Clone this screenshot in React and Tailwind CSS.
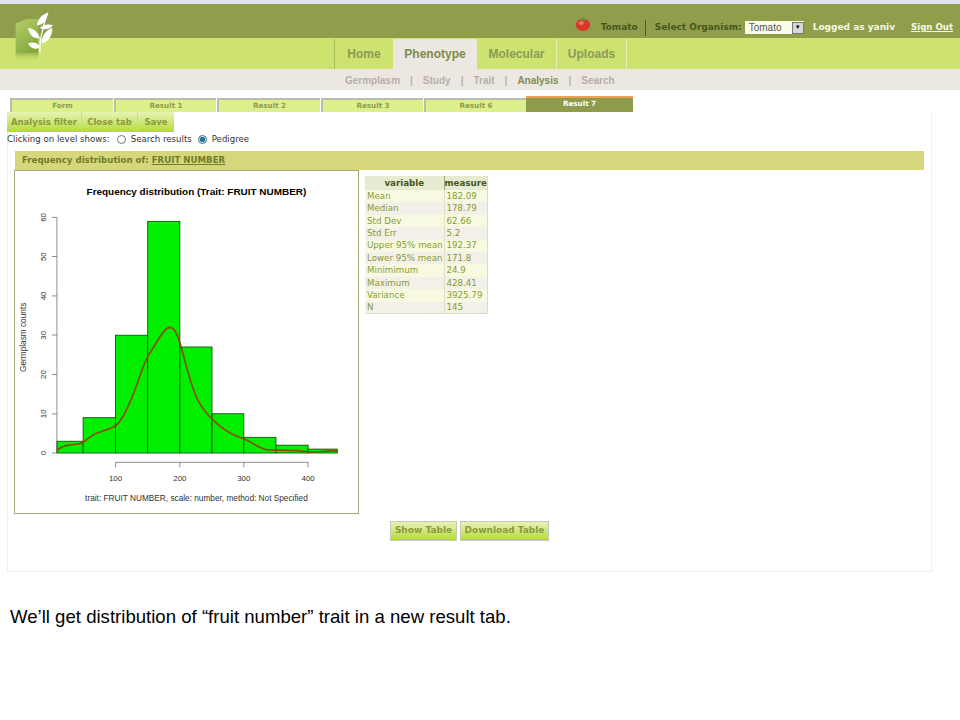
const tabs = [
  { label: "Form", width: "w-[103px]" },
  { label: "Result 1", width: "w-[102px]" },
  { label: "Result 2", width: "w-[103px]" },
  { label: "Result 3", width: "w-[102px]" },
  { label: "Result 6", width: "w-[102px]" },
];

const stats = [
  ["Mean", "182.09"],
  ["Median", "178.79"],
  ["Std Dev", "62.66"],
  ["Std Err", "5.2"],
  ["Upper 95% mean", "192.37"],
  ["Lower 95% mean", "171.8"],
  ["Minimimum", "24.9"],
  ["Maximum", "428.41"],
  ["Variance", "3925.79"],
  ["N", "145"],
];

// histogram in the coordinates of the 3x crop
const bars = [
  [167, 246, 3],
  [246, 344, 9],
  [344, 441, 30],
  [441, 538, 59],
  [538, 635, 27],
  [635, 731, 10],
  [731, 828, 4],
  [828, 925, 2],
  [925, 1013, 1],
];

const curve =
  "M167 903 C178 893 190 888 205 887 C225 886 240 884 250 876 C262 866 275 855 290 850 C310 843 330 838 345 828 C365 812 385 770 410 700 C425 655 435 625 450 605 C470 575 490 532 508 532 C525 532 535 565 550 620 C565 680 580 735 600 765 C615 790 630 805 650 822 C670 840 690 855 731 868 C755 878 780 900 805 902 C840 903 880 900 925 908 C950 910 985 902 1013 905";

function Logo() {
  return (
    <svg viewBox="0 0 60 60" className="absolute left-[12px] top-[10px] w-[44px] h-[54px]" preserveAspectRatio="none">
      <defs>
        <linearGradient id="box" x1="0" y1="0" x2="0.6" y2="1">
          <stop offset="0" stopColor="#b5cf6c" />
          <stop offset="1" stopColor="#86a83f" />
        </linearGradient>
        <linearGradient id="shade" x1="0" y1="0" x2="0" y2="1">
          <stop offset="0" stopColor="#9cb554" />
          <stop offset="1" stopColor="#cde26f" stopOpacity="0" />
        </linearGradient>
      </defs>
      <path d="M5 15 Q14 12 20 10 H36 V48 H5 Z" fill="url(#box)" />
      <rect x="5" y="48" width="31" height="9" fill="url(#shade)" />
      <g fill="#ffffff">
        <path d="M38 48 C38 38 39 30 41 25 C43 17 45 10 49 3" stroke="#ffffff" strokeWidth="1.6" fill="none" />
        <path d="M34 17 C35 10 41 5 49 3 C48 11 42 17 34 17 Z" />
        <path d="M38 20 C42 16 50 15 56 17 C52 21 44 23 38 20 Z" />
        <path d="M41 37 C40 28 47 22 55 20 C55 29 49 36 41 37 Z" />
        <path d="M38 31 C36 25 29 20 22 20 C23 27 30 33 38 31 Z" />
        <path d="M38 41 C35 36 28 35 22 37 C25 43 32 45 38 41 Z" />
      </g>
    </svg>
  );
}

function Tomato() {
  return (
    <svg viewBox="0 0 18 18" className="w-[16px] h-[16px] mb-[8px]">
      <ellipse cx="9" cy="10" rx="8" ry="7" fill="#d8382a" />
      <ellipse cx="7" cy="8" rx="3" ry="2" fill="#ee7a5e" />
      <path d="M5 4 L9 2 L13 4 L9 5.5 Z" fill="#6d8a3a" />
    </svg>
  );
}

function Chart() {
  return (
    <svg viewBox="42 60 1032 1032" className="w-full h-full block" fontFamily="'Liberation Sans', Arial, sans-serif">
      <text x="588" y="133" textAnchor="middle" fontSize="30" fontWeight="700" fill="#000">
        Frequency distribution (Trait: FRUIT NUMBER)
      </text>
      {bars.map(([x1, x2, n]) => {
        const h = n * 11.85;
        return <rect key={x1} x={x1} y={911 - h} width={x2 - x1} height={h} fill="#00ee00" stroke="#0b4a0b" strokeWidth="2.5" />;
      })}
      <path d={curve} fill="none" stroke="#8c4a00" strokeWidth="5" />
      {/* y axis */}
      <path d="M167 200 V911 M152 200 H167 M152 318 H167 M152 437 H167 M152 555 H167 M152 674 H167 M152 793 H167 M152 911 H167" stroke="#555" strokeWidth="2" fill="none" />
      {[0, 10, 20, 30, 40, 50, 60].map((v) => {
        const y = 911 - v * 11.85;
        return (
          <text key={v} x="134" y={y} textAnchor="middle" fontSize="24" fill="#333" transform={`rotate(-90 134 ${y})`}>
            {v}
          </text>
        );
      })}
      {/* x axis */}
      <path d="M344 939 H925 M344 939 V954 M538 939 V954 M731 939 V954 M925 939 V954" stroke="#555" strokeWidth="2" fill="none" />
      {[[344, 100], [538, 200], [731, 300], [925, 400]].map(([x, v]) => (
        <text key={v} x={x} y="996" textAnchor="middle" fontSize="24" fill="#333">
          {v}
        </text>
      ))}
      <text x="73" y="562" textAnchor="middle" fontSize="25" fill="#333" transform="rotate(-90 73 562)">
        Germplasm counts
      </text>
      <text x="588" y="1056" textAnchor="middle" fontSize="25" fill="#333">
        trait: FRUIT NUMBER, scale: number, method: Not Specified
      </text>
    </svg>
  );
}

export default function App() {
  return (
    <div className="w-[960px] h-[720px] bg-white relative overflow-hidden font-['DejaVu_Sans',sans-serif]">
      <div className="h-[4px] bg-[#dfe4f0]" />
      <div className="h-[34px] bg-[#8e9e4b] flex items-center justify-end pt-[13px] pr-[7px] text-[9px] font-bold">
        <Tomato />
        <span className="ml-[10px] text-[#48561c]">Tomato</span>
        <span className="ml-[7px] mr-[9px] h-[16px] w-px bg-[#4f5c22]" />
        <span className="text-[#48561c]">Select Organism:</span>
        <span className="ml-[3px] w-[59px] h-[13px] bg-[#fcfde8] flex items-center justify-between font-['Liberation_Sans',sans-serif] font-normal text-[10px] text-[#555]">
          <span className="pl-[4px]">Tomato</span>
          <span className="w-[12px] h-[12px] bg-[#d8d8d8] border border-[#777] flex items-center justify-center text-[6px] text-black">▼</span>
        </span>
        <span className="ml-[9px] text-[#f6f8e4]">Logged as yaniv</span>
        <span className="ml-[16px] text-[8.6px] text-[#f6f8e4] underline">Sign Out</span>
      </div>
      <div className="h-[31px] bg-[#cde26f] pl-[334px] pt-px flex font-['Liberation_Sans',sans-serif] text-[12px] font-bold text-[#8c9b55]">
        <span className="w-[59px] flex items-center justify-center border-l border-[#a9bd5c]">Home</span>
        <span className="w-[84px] flex items-center justify-center bg-[#ece8e1] text-[#7d8b48]">Phenotype</span>
        <span className="w-[80px] flex items-center justify-center border-r border-[#e3eeb0]">Molecular</span>
        <span className="w-[70px] flex items-center justify-center border-r border-[#e3eeb0]">Uploads</span>
      </div>
      <div className="h-[21px] bg-[#ece8e1] pl-[345px] pt-px flex items-center gap-[10px] font-['Liberation_Sans',sans-serif] text-[10px] font-bold text-[#b9afa6]">
        <span>Germplasm</span>
        <span>|</span>
        <span>Study</span>
        <span>|</span>
        <span>Trait</span>
        <span>|</span>
        <span className="text-[#7f8c50]">Analysis</span>
        <span>|</span>
        <span>Search</span>
      </div>
      <Logo />

      <div className="pt-[6px] pl-[10px] flex items-end gap-px text-[7.2px] font-bold text-[#8f9c52]">
        {tabs.map((t) => (
          <div key={t.label} className={`${t.width} h-[14px] bg-[#dbef8a] border-t-2 border-l-2 border-[#b9bcae] flex items-center justify-center`}>
            {t.label}
          </div>
        ))}
        <div className="w-[107px] h-[16px] -ml-px bg-[#8e9b4a] border-t-2 border-[#eba255] text-white flex justify-center pt-px">Result 7</div>
      </div>

      <div className="ml-[7px] w-[925px] h-[460px] border border-[#efefe6] border-t-0 relative">
        <div className="-ml-px flex h-[20px] text-[8.5px] font-bold text-[#8a9a40]">
          <span className="w-[75px] flex items-center justify-center bg-gradient-to-b from-[#e8f2b4] to-[#b4dc1c] border-r border-[#cfdc90]">Analysis filter</span>
          <span className="w-[56px] flex items-center justify-center bg-gradient-to-b from-[#e8f2b4] to-[#b4dc1c] border-r border-[#cfdc90]">Close tab</span>
          <span className="w-[36px] flex items-center justify-center bg-gradient-to-b from-[#e8f2b4] to-[#b4dc1c]">Save</span>
        </div>
        <div className="-ml-px h-[14px] flex items-center text-[8.6px] text-[#333]">
          <span>Clicking on level shows:</span>
          <input type="radio" name="level" className="ml-[7px] w-[9px] h-[9px] m-0" />
          <span className="ml-[5px]">Search results</span>
          <input type="radio" name="level" defaultChecked className="ml-[6px] w-[9px] h-[9px] m-0 accent-[#2c6f8f]" />
          <span className="ml-[5px]">Pedigree</span>
        </div>
        <div className="mt-[5px] ml-[7px] w-[909px] h-[19px] bg-[#d5d77a] flex items-center pl-[7px] text-[8.65px] font-bold text-[#6f7d2c]">
          <span>Frequency distribution of:</span>
          <span className="ml-[3px] underline">FRUIT NUMBER</span>
        </div>
        <div className="flex items-start ml-[6px]">
          <div className="w-[345px] h-[344px] border border-[#a6ab7a] bg-white shrink-0">
            <Chart />
          </div>
          <table className="ml-[6px] mt-[6px] w-[122px] table-fixed border-collapse text-[8.7px] text-[#8a9a30] leading-none border-r border-b border-[#dcdcc4]">
            <thead>
              <tr className="h-[14px] bg-[#e6ead0] text-[#48561c]">
                <th className="w-[79px] font-bold border-r border-[#a6ab7a]">variable</th>
                <th className="w-[43px] font-bold">measure</th>
              </tr>
            </thead>
            <tbody>
              {stats.map(([name, value], i) => (
                <tr key={name} className={`h-[12.4px] ${i % 2 === 0 ? "bg-[#f7fae0]" : "bg-[#f3f0ea]"}`}>
                  <td className="pl-[2px] whitespace-nowrap border-r border-[#dfe0c4]">{name}</td>
                  <td className="pl-[2px] whitespace-nowrap">{value}</td>
                </tr>
              ))}
            </tbody>
          </table>
        </div>
        <div className="mt-[7px] ml-[382px] flex gap-[3px] text-[9px] font-bold text-[#8a9a40]">
          <span className="w-[67px] h-[20px] flex items-center justify-center border border-[#c8c8b8] bg-gradient-to-b from-[#e8f2b4] to-[#b4dc1c]">Show Table</span>
          <span className="w-[89px] h-[20px] flex items-center justify-center border border-[#c8c8b8] bg-gradient-to-b from-[#e8f2b4] to-[#b4dc1c]">Download Table</span>
        </div>
      </div>

      <p className="mt-[35px] ml-[10px] font-['Liberation_Sans',sans-serif] text-[18.6px] leading-[20px] text-black">
        We’ll get distribution of “fruit number” trait in a new result tab.
      </p>
    </div>
  );
}
